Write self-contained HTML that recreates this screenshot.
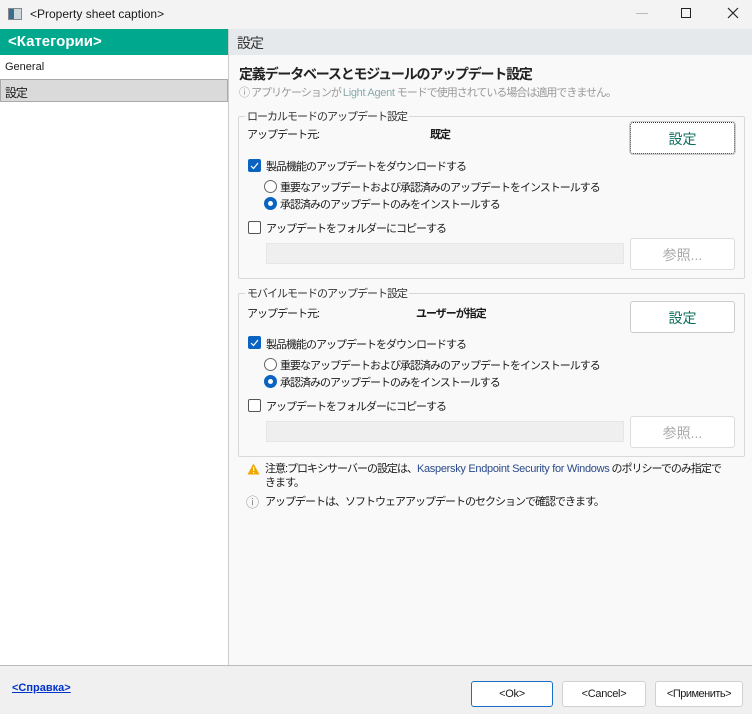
<!DOCTYPE html>
<html><head><meta charset="utf-8"><style>
*{box-sizing:border-box;margin:0;padding:0}
body{width:752px;height:714px;position:relative;background:#f3f3f3;font-family:"Liberation Sans","Noto Sans CJK JP",sans-serif;font-size:11px;letter-spacing:-1px;color:#1a1a1a;overflow:hidden}
.a{position:absolute;white-space:nowrap}
.l{letter-spacing:0}
.btn{position:absolute;background:#fff;border:1px solid #d0d0d0;border-radius:3px;text-align:center;letter-spacing:0}
.cb{position:absolute;width:13px;height:13px;border:1px solid #555;border-radius:2px;background:#fff}
.cb.on{background:#0b63c1;border-color:#0b63c1}
.rd{position:absolute;width:13px;height:13px;border:1px solid #666;border-radius:50%;background:#fff}
.rd.on{border:4px solid #0b63c1}
.grp{position:absolute;border:1px solid #d8d8d8;border-radius:2px}
.lg{position:absolute;background:#f9f9f9;padding:0 2px;color:#333;white-space:nowrap}
.inp{position:absolute;background:#efefef;border:1px solid #e6e6e6}
</style></head><body>
<!-- title -->
<div class="a" style="left:8px;top:8px;width:14px;height:12px;border:1px solid #888;background:linear-gradient(90deg,#3a6e8f 40%,#cfd8dc 40%)"></div>
<div class="a l" style="left:30px;top:7px;font-size:12px">&lt;Property sheet caption&gt;</div>
<div class="a" style="left:636px;top:13px;width:12px;height:1px;background:#bbb"></div>
<div class="a" style="left:681px;top:8px;width:10px;height:10px;border:1.3px solid #222"></div>
<svg class="a" style="left:727px;top:7px" width="12" height="12"><path d="M1 1L11 11M11 1L1 11" stroke="#222" stroke-width="1.2"/></svg>
<!-- left -->
<div class="a" style="left:0;top:29px;width:229px;height:637px;background:#fff;border-right:1px solid #ccc"></div>
<div class="a l" style="left:0;top:29px;width:228px;height:26px;background:#00a88e;color:#fff;font-weight:bold;font-size:15px;padding:4px 0 0 8px">&lt;Категории&gt;</div>
<div class="a l" style="left:5px;top:61px">General</div>
<div class="a" style="left:0;top:79px;width:228px;height:23px;background:#dadada;border:1px solid #aaa;padding:4px 0 0 4px;font-size:12px">設定</div>
<!-- right -->
<div class="a" style="left:229px;top:29px;width:523px;height:637px;background:#f9f9f9"></div>
<div class="a" style="left:229px;top:29px;width:523px;height:26px;background:#e6e9ec;font-size:14px;color:#333;padding:4px 0 0 8px">設定</div>
<div class="a" style="left:239px;top:64px;font-size:14px;letter-spacing:-1.2px;font-weight:bold;color:#222">定義データベースとモジュールのアップデート設定</div>
<div class="a" style="left:239px;top:84px;color:#999">ⓘ アプリケーションが <span style="color:#8aa;letter-spacing:-0.3px">Light Agent</span> モードで使用されている場合は適用できません。</div>
<!-- group1 -->
<div class="grp" style="left:238px;top:116px;width:507px;height:163px"></div>
<div class="lg" style="left:245px;top:108px">ローカルモードのアップデート設定</div>
<div class="a" style="left:247px;top:126px">アップデート元:</div>
<div class="a" style="left:430px;top:126px;font-weight:bold">既定</div>
<div class="btn" style="left:630px;top:122px;width:105px;height:32px;border:1px dotted #333;outline:1px solid #ccc;font-size:14px;color:#0a6e5c;padding-top:6px">設定</div>
<div class="cb on" style="left:248px;top:159px"></div><svg class="a" style="left:250px;top:162px" width="9" height="8"><path d="M1 4L3.5 6.5L8 1" stroke="#fff" fill="none" stroke-width="1.2"/></svg>
<div class="a" style="left:266px;top:158px">製品機能のアップデートをダウンロードする</div>
<div class="rd" style="left:264px;top:180px"></div><div class="a" style="left:280px;top:179px">重要なアップデートおよび承認済みのアップデートをインストールする</div>
<div class="rd on" style="left:264px;top:197px"></div><div class="a" style="left:280px;top:196px">承認済みのアップデートのみをインストールする</div>
<div class="cb" style="left:248px;top:221px"></div><div class="a" style="left:266px;top:220px">アップデートをフォルダーにコピーする</div>
<div class="inp" style="left:266px;top:243px;width:358px;height:21px"></div>
<div class="btn" style="left:630px;top:238px;width:105px;height:32px;border-color:#ddd;font-size:14px;color:#aaa;padding-top:6px">参照...</div>
<!-- group2 -->
<div class="grp" style="left:238px;top:293px;width:507px;height:164px"></div>
<div class="lg" style="left:245px;top:285px">モバイルモードのアップデート設定</div>
<div class="a" style="left:247px;top:305px">アップデート元:</div>
<div class="a" style="left:416px;top:305px;font-weight:bold">ユーザーが指定</div>
<div class="btn" style="left:630px;top:301px;width:105px;height:32px;border-color:#ccc;font-size:14px;color:#0a6e5c;padding-top:6px">設定</div>
<div class="cb on" style="left:248px;top:336px"></div><svg class="a" style="left:250px;top:339px" width="9" height="8"><path d="M1 4L3.5 6.5L8 1" stroke="#fff" fill="none" stroke-width="1.2"/></svg>
<div class="a" style="left:266px;top:336px">製品機能のアップデートをダウンロードする</div>
<div class="rd" style="left:264px;top:358px"></div><div class="a" style="left:280px;top:357px">重要なアップデートおよび承認済みのアップデートをインストールする</div>
<div class="rd on" style="left:264px;top:375px"></div><div class="a" style="left:280px;top:374px">承認済みのアップデートのみをインストールする</div>
<div class="cb" style="left:248px;top:399px"></div><div class="a" style="left:266px;top:398px">アップデートをフォルダーにコピーする</div>
<div class="inp" style="left:266px;top:421px;width:358px;height:21px"></div>
<div class="btn" style="left:630px;top:416px;width:105px;height:32px;border-color:#ddd;font-size:14px;color:#aaa;padding-top:6px">参照...</div>
<!-- notes -->
<svg class="a" style="left:247px;top:463px" width="13" height="12"><path d="M6.5 0.5L12.5 11.5H0.5Z" fill="#f0a800"/><rect x="6" y="4" width="1.2" height="4" fill="#fff"/><rect x="6" y="9" width="1.2" height="1.2" fill="#fff"/></svg>
<div class="a" style="left:265px;top:462px;line-height:14px">注意:プロキシサーバーの設定は、<span style="color:#2b4a8a;letter-spacing:-0.3px">Kaspersky Endpoint Security for Windows</span> のポリシーでのみ指定で<br>きます。</div>
<div class="a" style="left:246px;top:492px;color:#888;font-size:13px">ⓘ</div>
<div class="a" style="left:265px;top:493px">アップデートは、ソフトウェアアップデートのセクションで確認できます。</div>
<!-- footer -->
<div class="a" style="left:0;top:665px;width:752px;height:49px;background:#f0f0f0;border-top:1px solid #bbb"></div>
<div class="a l" style="left:12px;top:682px;color:#0033cc;text-decoration:underline;font-weight:bold;font-size:11px">&lt;Справка&gt;</div>
<div class="btn" style="left:471px;top:681px;width:82px;height:26px;border-color:#1a6fc4;padding-top:6px;font-size:11px;letter-spacing:-0.3px">&lt;Ok&gt;</div>
<div class="btn" style="left:562px;top:681px;width:84px;height:26px;padding-top:6px;font-size:11px;letter-spacing:-0.3px">&lt;Cancel&gt;</div>
<div class="btn" style="left:655px;top:681px;width:88px;height:26px;padding-top:6px;font-size:11px;letter-spacing:-0.5px">&lt;Применить&gt;</div>
</body></html>
